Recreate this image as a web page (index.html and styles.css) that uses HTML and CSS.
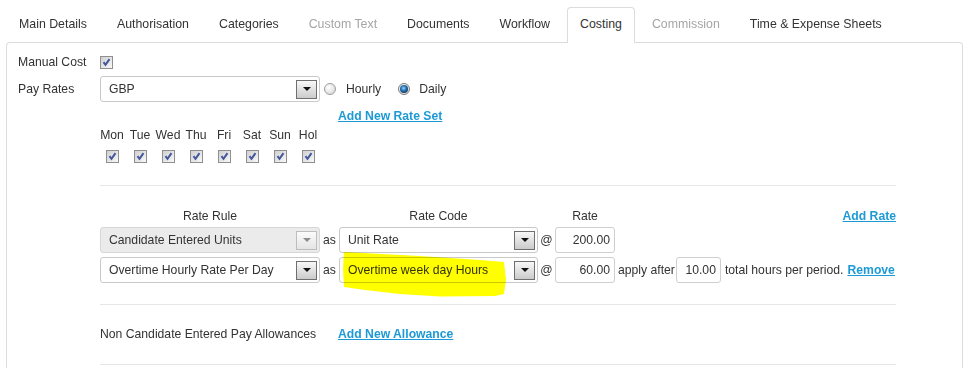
FILE: index.html
```html
<!doctype html>
<html lang="en">
  <head>
    <meta charset="utf-8">
    <title>Costing</title>
    <link rel="stylesheet" href="styles.css">
  </head>
  <body>
    <ul class="tabs">
      <li class="tab">Main Details</li>
      <li class="tab">Authorisation</li>
      <li class="tab">Categories</li>
      <li class="tab off">Custom Text</li>
      <li class="tab">Documents</li>
      <li class="tab">Workflow</li>
      <li class="tab active">Costing</li>
      <li class="tab off">Commission</li>
      <li class="tab">Time &amp; Expense Sheets</li>
    </ul>

    <div class="panel">
      <div class="row row-manual">
        <span class="label">Manual Cost</span>
        <span class="cb"><svg viewBox="0 0 11 11"><path d="M2.5 5.2l2 2.6 4-5.6"/></svg></span>
      </div>

      <div class="row row-pay">
        <span class="label">Pay Rates</span>
        <div class="select w-rule"><span class="sel-text">GBP</span><span class="sel-btn"></span></div>
        <span class="radio first-radio"></span><span class="opt">Hourly</span>
        <span class="radio on"></span><span class="opt">Daily</span>
      </div>

      <div class="section">
        <a class="link rate-set" href="#">Add New Rate Set</a>

        <div class="days">
          <div class="day"><span>Mon</span><span class="cb"><svg viewBox="0 0 11 11"><path d="M2.5 5.2l2 2.6 4-5.6"/></svg></span></div>
          <div class="day"><span>Tue</span><span class="cb"><svg viewBox="0 0 11 11"><path d="M2.5 5.2l2 2.6 4-5.6"/></svg></span></div>
          <div class="day"><span>Wed</span><span class="cb"><svg viewBox="0 0 11 11"><path d="M2.5 5.2l2 2.6 4-5.6"/></svg></span></div>
          <div class="day"><span>Thu</span><span class="cb"><svg viewBox="0 0 11 11"><path d="M2.5 5.2l2 2.6 4-5.6"/></svg></span></div>
          <div class="day"><span>Fri</span><span class="cb"><svg viewBox="0 0 11 11"><path d="M2.5 5.2l2 2.6 4-5.6"/></svg></span></div>
          <div class="day"><span>Sat</span><span class="cb"><svg viewBox="0 0 11 11"><path d="M2.5 5.2l2 2.6 4-5.6"/></svg></span></div>
          <div class="day"><span>Sun</span><span class="cb"><svg viewBox="0 0 11 11"><path d="M2.5 5.2l2 2.6 4-5.6"/></svg></span></div>
          <div class="day"><span>Hol</span><span class="cb"><svg viewBox="0 0 11 11"><path d="M2.5 5.2l2 2.6 4-5.6"/></svg></span></div>
        </div>

        <hr class="sep">

        <div class="rates">
          <div class="head">Rate Rule</div>
          <div class="head c-code">Rate Code</div>
          <div class="head c-rate">Rate</div>
          <a class="link add-rate" href="#">Add Rate</a>

          <div class="select disabled first"><span class="sel-text">Candidate Entered Units</span><span class="sel-btn"></span></div>
          <span class="mid">as</span>
          <div class="select"><span class="sel-text">Unit Rate</span><span class="sel-btn"></span></div>
          <span class="mid">@</span>
          <div class="input">200.00</div>

          <div class="select first"><span class="sel-text">Overtime Hourly Rate Per Day</span><span class="sel-btn"></span></div>
          <span class="mid">as</span>
          <div class="code-wrap">
            <div class="select"><span class="sel-text">Overtime week day Hours</span><span class="sel-btn"></span></div>
            <svg class="mark" viewBox="0 0 175 52"><path d="M5 5 81 9 141 13 165 15 167 32 165 47 156 49 101 49.5 61 47 26 43 5 40 4 22Z"/></svg>
          </div>
          <span class="mid">@</span>
          <div class="input">60.00</div>
          <div class="extra">
            <span class="t1">apply after</span>
            <div class="input w-after">10.00</div>
            <span class="t2">total hours per period.</span>
            <a class="link remove" href="#">Remove</a>
          </div>
        </div>

        <hr class="sep sep-b">

        <div class="allow">
          <span>Non Candidate Entered Pay Allowances</span>
          <a class="link" href="#">Add New Allowance</a>
        </div>

        <hr class="sep sep-c">
      </div>
    </div>
  </body>
</html>
```

FILE: styles.css
```css
body {
    margin: 0;
    font-family: "Liberation Sans", Arial, sans-serif;
    font-size: 12.2px;
    color: #333;
    background: #fff;
}

/* tab strip */
.tabs {
    display: flex;
    list-style: none;
    margin: 0;
    padding: 7px 0 0 6px;
    font-size: 12.35px;
}

.tab {
    position: relative;
    box-sizing: border-box;
    height: 36px;
    margin: 0 4px -1px 0;
    padding: 0 12px;
    line-height: 33px;
    border: 1px solid transparent;
    border-bottom: none;
    border-radius: 4px 4px 0 0;
    white-space: nowrap;
}

.tab.off {
    color: #a5a5a5;
}

.tab.active {
    z-index: 1;
    background: #fff;
    border-color: #dcdcdc;
}

.panel {
    margin: 0 6px;
    padding: 10px 0 0 11px;
    height: 340px;
    border: 1px solid #dcdcdc;
    border-bottom: none;
    border-radius: 4px 4px 0 0;
}

.row {
    display: flex;
    align-items: center;
}

.row-manual {
    height: 18px;
}

.row-pay {
    margin-top: 5px;
}

.label {
    flex: none;
    width: 82px;
}

/* checkbox */
.cb {
    box-sizing: border-box;
    display: flex;
    align-items: center;
    justify-content: center;
    width: 13px;
    height: 13px;
    border: 1px solid #8f8f8f;
    background: linear-gradient(135deg, #d0d0d0, #f8f8f8);
}

.cb svg {
    display: block;
    width: 11px;
    height: 11px;
}

.cb path {
    fill: none;
    stroke: #44569c;
    stroke-width: 2;
}

/* radio */
.radio {
    box-sizing: border-box;
    display: flex;
    align-items: center;
    justify-content: center;
    width: 12px;
    height: 12px;
    margin-left: 17px;
    border: 1px solid #9c9c9c;
    border-radius: 50%;
    background: radial-gradient(circle at 35% 35%, #fff, #d2d2d2);
}

.radio.first-radio {
    margin-left: 4px;
}

.radio.on {
    border-color: #7d7d7d;
}

.radio.on::after {
    content: "";
    width: 8px;
    height: 8px;
    border-radius: 50%;
    background: radial-gradient(circle at 45% 40%, #9ad6ff 0, #2f7cc0 35%, #123f6c 70%, #0a2340);
}

.opt {
    margin-left: 10px;
}

.radio.on + .opt {
    margin-left: 9px;
}

/* select box */
.select {
    box-sizing: border-box;
    display: flex;
    align-items: center;
    height: 26px;
    padding: 0 2px 0 8px;
    border: 1px solid #c9c9c9;
    border-radius: 3px;
    background: #fff;
    white-space: nowrap;
}

.w-rule {
    width: 220px;
}

.sel-text {
    flex: 1;
}

.sel-btn {
    box-sizing: border-box;
    display: flex;
    align-items: center;
    justify-content: center;
    width: 21px;
    height: 19px;
    border: 1px solid #6f6f6f;
    background: linear-gradient(#f8f8f8, #cbcbcb);
}

.sel-btn::after {
    content: "";
    border-left: 4px solid transparent;
    border-right: 4px solid transparent;
    border-top: 4px solid #111;
}

.select.disabled {
    background: #ebebeb;
    border-color: #d6d6d6;
}

.select.disabled .sel-btn {
    border-color: #bdbdbd;
    background: linear-gradient(#fbfbfb, #e4e4e4);
}

.select.disabled .sel-btn::after {
    border-top-color: #8c8c8c;
}

/* text input */
.input {
    box-sizing: border-box;
    display: flex;
    align-items: center;
    justify-content: flex-end;
    height: 26px;
    padding-right: 4px;
    border: 1px solid #cfcfcf;
    border-radius: 3px;
    background: #fff;
}

.w-after {
    width: 45px;
    margin-left: 1px;
}

.link {
    color: #1d9ad6;
    font-weight: bold;
    text-decoration: underline;
}

.section {
    width: 796px;
    margin-left: 82px;
}

.rate-set {
    display: block;
    width: fit-content;
    margin: 7px 0 0 238px;
    line-height: 14px;
}

.days {
    display: flex;
    margin: 5px 0 0 -2px;
}

.day {
    display: flex;
    flex-direction: column;
    align-items: center;
    width: 28px;
    line-height: 14px;
}

.day .cb {
    margin-top: 8px;
}

.sep {
    height: 0;
    margin: 22px 0 0;
    border: 0;
    border-top: 1px solid #e6e6e6;
}

.sep-b {
    margin-top: 21px;
}

.sep-c {
    margin-top: 23px;
}

/* rate rules */
.rates {
    display: grid;
    grid-template-columns: 220px 19px 199px 17px 60px 1fr;
    row-gap: 4px;
    align-items: center;
    margin-top: 23px;
}

.head {
    text-align: center;
    line-height: 14px;
}

.c-code {
    grid-column: 3;
}

.c-rate {
    grid-column: 5;
}

.add-rate {
    grid-column: 6;
    justify-self: end;
    line-height: 14px;
}

.first {
    grid-column: 1;
}

.mid {
    text-align: center;
}

.code-wrap {
    position: relative;
}

.mark {
    position: absolute;
    left: 0;
    top: -10px;
    width: 175px;
    height: 52px;
    fill: #ffff00;
    mix-blend-mode: multiply;
    pointer-events: none;
}

.extra {
    display: flex;
    align-items: center;
    white-space: nowrap;
}

.t1 {
    margin-left: 3px;
}

.t2 {
    margin-left: 4px;
}

.remove {
    margin-left: 4px;
}

.allow {
    display: grid;
    grid-template-columns: 238px auto;
    justify-content: start;
    margin-top: 22px;
    line-height: 14px;
}
```
